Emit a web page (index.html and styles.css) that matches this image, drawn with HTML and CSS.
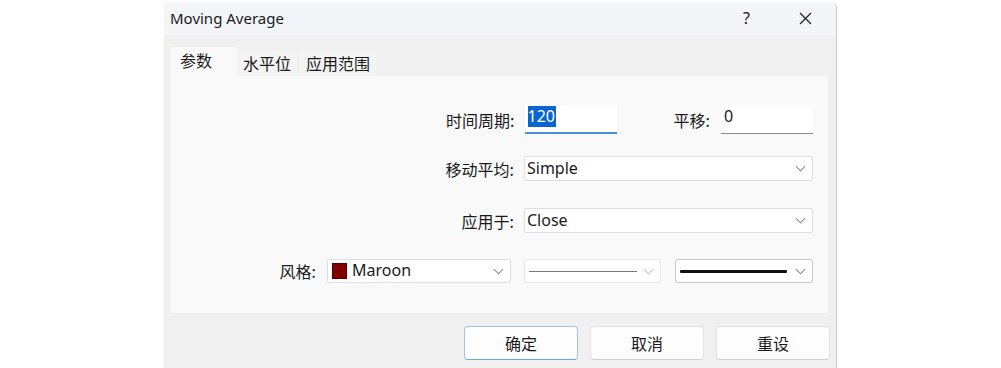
FILE: index.html
```html
<!DOCTYPE html>
<html>
<head>
<meta charset="utf-8">
<link rel="stylesheet" href="styles.css">
</head>
<body>
<div class="dialog">
  <div class="titlebar">
    <span class="title">Moving Average</span>
    <span class="help">?</span>
    <span class="close"><svg width="13" height="13" viewBox="0 0 13 13"><path d="M1 1 L12 12 M12 1 L1 12" stroke="#222" stroke-width="1.3" fill="none"/></svg></span>
  </div>
  <div class="body">
    <div class="tabs">
      <div class="tab active">参数</div>
      <div class="tab">水平位</div>
      <div class="tab">应用范围</div>
    </div>
    <div class="panel">
      <div class="row r1">
        <span class="label">时间周期:</span>
        <div class="edit focus"><span class="sel">120</span></div>
        <span class="label shift">平移:</span>
        <div class="edit"><span>0</span></div>
      </div>
      <div class="row r2">
        <span class="label">移动平均:</span>
        <div class="combo wide"><span class="val">Simple</span><span class="chev"></span></div>
      </div>
      <div class="row r3">
        <span class="label">应用于:</span>
        <div class="combo wide"><span class="val">Close</span><span class="chev"></span></div>
      </div>
      <div class="row r4">
        <span class="label">风格:</span>
        <div class="combo color"><span class="swatch"></span><span class="val">Maroon</span><span class="chev"></span></div>
        <div class="combo line"><span class="stroke thin"></span><span class="chev light"></span></div>
        <div class="combo line thickbox"><span class="stroke thick"></span><span class="chev"></span></div>
      </div>
    </div>
    <div class="buttons">
      <button class="btn default">确定</button>
      <button class="btn">取消</button>
      <button class="btn">重设</button>
    </div>
  </div>
</div>
</body>
</html>
```

FILE: styles.css
```css
html, body {
  margin: 0;
  padding: 0;
  background: #ffffff;
  width: 1001px;
  height: 368px;
  overflow: hidden;
}
body {
  font-family: "Noto Sans", "Noto Sans CJK SC", sans-serif;
  color: #1a1a1a;
}
.dialog {
  margin-left: 164px;
  margin-top: 2px;
  width: 672px;
  height: 366px;
  border-right: 1px solid #c9c9c9;
  border-top-right-radius: 6px;
  background: #f0f0f0;
  display: flex;
  flex-direction: column;
  overflow: hidden;
}
.titlebar {
  height: 33px;
  background: #f3f5f9;
  display: flex;
  align-items: center;
  padding-left: 6px;
}
.title {
  font-size: 15px;
  color: #1a1a1a;
  flex: 1;
  margin-top: -2px;
}
.help {
  font-size: 16px;
  width: 12px;
  margin-right: 44px;
  margin-top: -2px;
}
.close {
  display: flex;
  width: 13px;
  margin-right: 24px;
  margin-top: -1px;
}
.body {
  flex: 1;
  display: flex;
  flex-direction: column;
}
.tabs {
  display: flex;
  align-items: flex-end;
  padding-top: 12px;
  padding-left: 6px;
  height: 29px;
}
.tab {
  font-family: "Noto Sans CJK SC", sans-serif;
  font-size: 16px;
  height: 26px;
  line-height: 26px;
  background: #f4f4f4;
  padding: 0 6px;
  margin-right: 3px;
}
.tab.active {
  height: 29px;
  line-height: 27px;
  background: #f9f9f9;
  width: 67px;
  padding: 0 0 0 10px;
  box-sizing: border-box;
  margin-right: 0;
}
.panel {
  margin-left: 6px;
  margin-right: 8px;
  height: 237px;
  background: #f9f9f9;
  box-sizing: border-box;
  padding-top: 29px;
  padding-right: 15px;
  display: flex;
  flex-direction: column;
}
.row {
  display: flex;
  justify-content: flex-end;
  align-items: center;
}
.r1 { height: 29px; }
.r2 { height: 25px; margin-top: 22px; }
.r3 { height: 25px; margin-top: 27px; }
.r4 { height: 24px; margin-top: 26px; }
.label {
  font-family: "Noto Sans CJK SC", sans-serif;
  font-size: 16px;
  margin-right: 10px;
}
.r4 .label { margin-right: 11px; }
.label.shift { margin-left: 57px; margin-right: 11px; }
.edit {
  width: 92px;
  height: 29px;
  box-sizing: border-box;
  background: #ffffff;
  border-bottom: 1px solid #8a8a8a;
  padding: 1px 0 0 3px;
  font-size: 16px;
  line-height: 21px;
}
.edit.focus {
  border-bottom: 2px solid #4a90d9;
}
.sel {
  background: #0a64d2;
  color: #ffffff;
  display: inline-block;
  padding: 0 1px 0 0;
}
.combo {
  height: 100%;
  box-sizing: border-box;
  background: #ffffff;
  border: 1px solid #dedede;
  border-radius: 2px;
  display: flex;
  align-items: center;
  position: relative;
  font-size: 16px;
}
.combo.wide { width: 289px; }
.combo .val { flex: 1; padding-left: 2px; margin-top: -2px; }
.chev {
  width: 6px;
  height: 6px;
  border-right: 1px solid #8c8c8c;
  border-bottom: 1px solid #8c8c8c;
  transform: rotate(45deg);
  margin-right: 8px;
  margin-top: -4px;
}
.chev.light { border-color: #c4c4c4; }
.combo.color { width: 184px; margin-right: 13px; }
.swatch {
  width: 15px;
  height: 16px;
  background: #800000;
  margin-left: 4px;
  margin-right: 5px;
  border: 1px solid #5a0000;
  box-sizing: border-box;
}
.combo.color .val { padding-left: 0; }
.combo.line { width: 137px; margin-right: 14px; border-color: #e6e6e6; }
.combo.line.thickbox { width: 138px; margin-right: 0; border-color: #c8c8c8; }
.stroke {
  flex: 1;
  margin-left: 4px;
  margin-right: 8px;
  background: #777;
}
.stroke.thin { height: 1px; }
.stroke.thick { height: 3px; background: #111; border-radius: 1px; margin-right: 10px; }
.buttons {
  display: flex;
  justify-content: flex-end;
  gap: 12px;
  margin-top: 13px;
  padding-right: 6px;
}
.btn {
  width: 114px;
  height: 34px;
  background: #fdfdfd;
  border: 1px solid #e2e2e2;
  border-bottom-color: #d0d0d0;
  border-radius: 4px;
  font-family: "Noto Sans CJK SC", sans-serif;
  font-size: 16px;
  color: #1a1a1a;
  padding: 0;
}
.btn.default {
  border: 1px solid #9fc4ea;
  border-bottom-color: #6fa6dc;
}
```
